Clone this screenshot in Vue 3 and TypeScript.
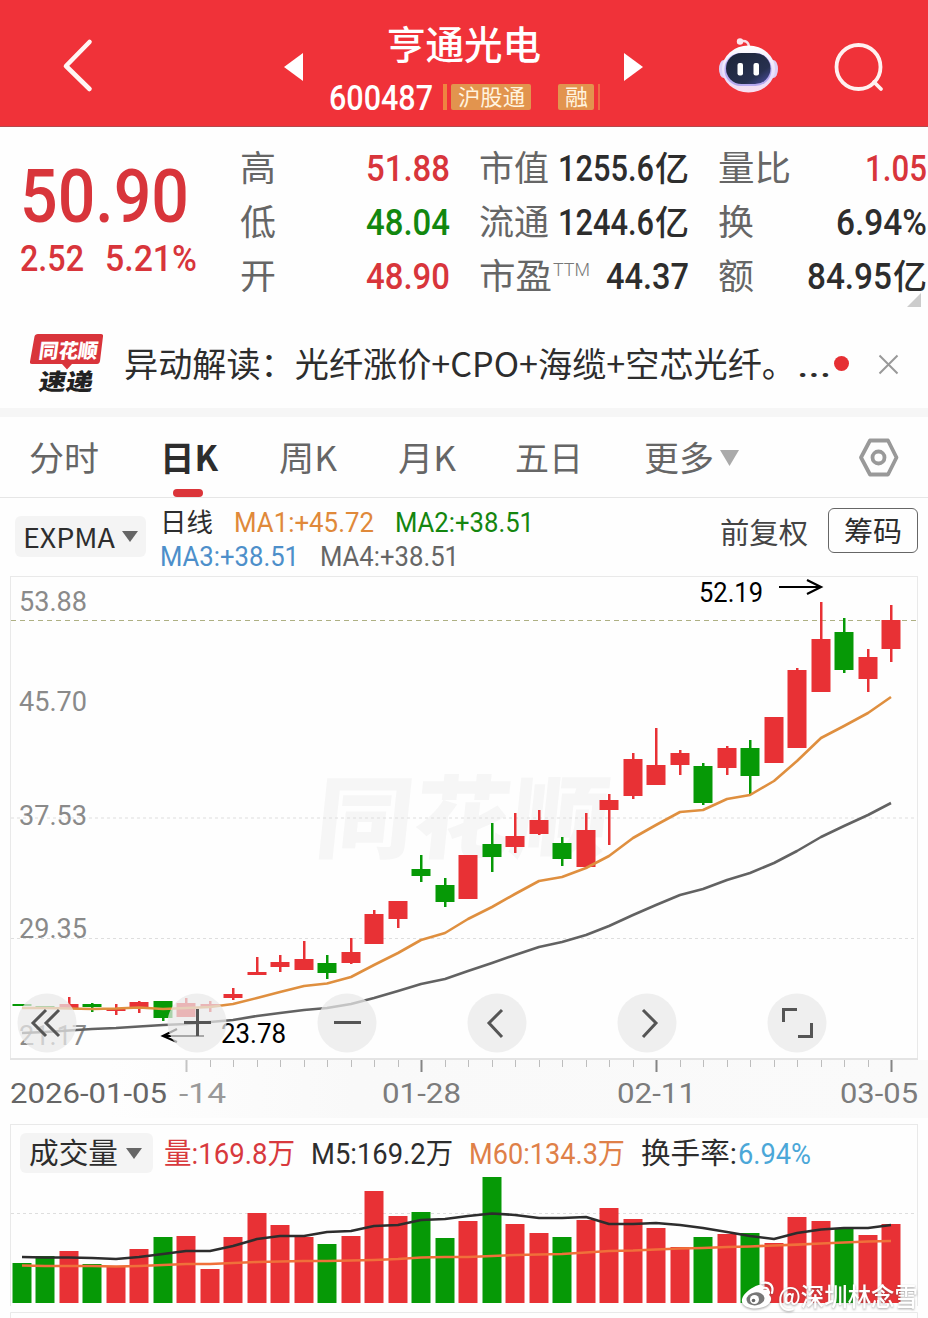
<script setup lang="ts">
import { h, type FunctionalComponent } from 'vue'

// A run of text set to an exact width; the bottom edge of its box is the baseline.
const Fit: FunctionalComponent<{ t: string; w: number }> = (p) =>
  h('svg', { width: p.w, class: 'fit' }, [
    h('text', { x: 0, y: '0.95em', textLength: p.w, lengthAdjust: 'spacingAndGlyphs' }, p.t),
  ])
Fit.props = ['t', 'w']

interface Stat { label: string; lw: number; value: string; vw: number; unit?: string; tone?: string; sup?: string }
const stats: Stat[][] = [
  [
    { label: '高', lw: 36, value: '51.88', vw: 84, tone: 'up' },
    { label: '低', lw: 36, value: '48.04', vw: 84, tone: 'down' },
    { label: '开', lw: 36, value: '48.90', vw: 84, tone: 'up' },
  ],
  [
    { label: '市值', lw: 70, value: '1255.6', vw: 96, unit: '亿' },
    { label: '流通', lw: 70, value: '1244.6', vw: 96, unit: '亿' },
    { label: '市盈', lw: 73, value: '44.37', vw: 83, sup: 'TTM' },
  ],
  [
    { label: '量比', lw: 73, value: '1.05', vw: 62, tone: 'up' },
    { label: '换', lw: 36, value: '6.94%', vw: 91 },
    { label: '额', lw: 36, value: '84.95', vw: 85, unit: '亿' },
  ],
]

const tabs = [
  { t: '分时', w: 70 }, { t: '日K', w: 58, on: true }, { t: '周K', w: 58 },
  { t: '月K', w: 58 }, { t: '五日', w: 68 }, { t: '更多', w: 70 },
]

const cx = (i: number) => Math.round(22 + 23.49 * i)

// high, body top, body bottom, low, rising
const candles: [number, number, number, number, 0 | 1][] = [
  [1004, 1004, 1006, 1006, 0], [1006, 1006, 1008, 1009, 0], [997, 1004, 1009, 1009, 1], [1003, 1004, 1007, 1012, 0],
  [1004, 1008, 1011, 1015, 1], [1001, 1002, 1009, 1013, 1], [1001, 1001, 1018, 1021, 0], [998, 1003, 1017, 1017, 1],
  [1001, 1004, 1007, 1012, 1], [988, 994, 998, 1000, 1], [957, 972, 975, 975, 1], [955, 962, 967, 972, 1],
  [941, 959, 970, 970, 1], [955, 963, 973, 979, 0], [938, 952, 963, 964, 1], [910, 914, 944, 944, 1],
  [901, 901, 919, 928, 1], [855, 869, 876, 882, 0], [878, 885, 902, 907, 0], [855, 855, 899, 899, 1],
  [823, 844, 857, 872, 0], [813, 836, 847, 853, 1], [810, 820, 834, 835, 1], [837, 843, 859, 866, 0],
  [813, 830, 867, 867, 1], [794, 800, 810, 845, 1], [753, 759, 796, 799, 1], [728, 765, 785, 785, 1],
  [750, 753, 765, 775, 1], [763, 766, 803, 805, 0], [746, 748, 768, 775, 1], [740, 748, 776, 794, 0],
  [717, 717, 763, 763, 1], [668, 670, 748, 748, 1], [602, 639, 692, 692, 1], [618, 632, 670, 673, 0],
  [649, 657, 679, 692, 1], [605, 620, 649, 662, 1],
]
const line = (ys: number[]) => ys.map((y, i) => `${cx(i)},${y}`).join(' ')
const ma1 = line([1008, 1008, 1008.5, 1009, 1008.5, 1007.5, 1009, 1008, 1007, 1004, 998, 992, 986, 983.5, 977, 965, 953, 940, 933, 919, 907, 894, 881, 877, 868, 856, 838, 825, 812, 810, 799, 795, 781, 761, 738, 726, 713, 697])
const ma4 = line([1033, 1032, 1030.5, 1029, 1028, 1026.5, 1025, 1024, 1022, 1020, 1016, 1013, 1010, 1008, 1004, 998, 991, 984, 979, 971, 963, 955, 947, 942, 935, 926, 915, 905, 895, 889, 880, 873, 863, 851, 837, 826, 815, 803])

const axis = [
  { t: '53.88', y: 611 }, { t: '45.70', y: 711 }, { t: '37.53', y: 825 }, { t: '29.35', y: 938 }, { t: '21.17', y: 1045 },
]
const ticks = Array.from({ length: 31 }, (_, k) => k + 7)
const buttons = [47, 197, 347, 497, 647, 797]

const volTops = [1263, 1256, 1251, 1264, 1266, 1249, 1237, 1236, 1269, 1237, 1213, 1225, 1237, 1244, 1236, 1191, 1216, 1212, 1238, 1221, 1177, 1224, 1233, 1237, 1220, 1208, 1219, 1228, 1247, 1237, 1234, 1233, 1243, 1217, 1221, 1229, 1235, 1224]
const m5 = line([1257, 1257.5, 1257.5, 1258, 1259, 1257, 1254, 1251, 1251, 1246, 1239, 1236, 1236, 1232, 1231, 1226, 1225, 1220, 1219, 1216, 1213.5, 1215, 1218, 1218, 1217, 1224, 1224, 1223, 1225, 1228, 1232, 1236, 1239, 1233, 1229.5, 1228, 1228, 1225])
const m60 = line([1265.5, 1266, 1266, 1266, 1266.5, 1266, 1265, 1264, 1264, 1263, 1262, 1261.5, 1261, 1261, 1260.5, 1260, 1259, 1257.5, 1257, 1257, 1256, 1255, 1254.5, 1254, 1252.5, 1251, 1250.5, 1249.5, 1248.5, 1248, 1247, 1246.5, 1245.5, 1244.6, 1243.5, 1242.5, 1241.5, 1241])
</script>

<template>
  <div class="page">
    <header class="top">
      <svg class="back" width="30" height="54"><path d="M27.500 4L4 28L27.500 51" /></svg>
      <svg class="prev" width="19" height="28"><path d="M0 14L19 0V28Z" /></svg>
      <div class="name">
        <Fit class="title" t="亨通光电" w="154" />
        <div class="codeline">
          <Fit class="code" t="600487" w="104" />
          <i class="bar"></i>
          <span class="badge wide"><Fit t="沪股通" w="67" /></span>
          <span class="badge one"><Fit t="融" w="23" /></span>
          <i class="bar thin"></i>
        </div>
      </div>
      <svg class="next" width="19" height="28"><path d="M19 14L0 0V28Z" /></svg>
      <svg class="robot" width="60" height="56" viewBox="718 37 60 56">
        <defs>
          <linearGradient id="shell" x1="0" y1="0" x2="0" y2="1"><stop offset="0" stop-color="#fff" /><stop offset=".65" stop-color="#e9dcfb" /><stop offset="1" stop-color="#f8dff0" /></linearGradient>
          <linearGradient id="visor" x1="0" y1="0" x2="1" y2="1"><stop offset="0" stop-color="#1c2438" /><stop offset=".7" stop-color="#27304f" /><stop offset="1" stop-color="#4d4fa5" /></linearGradient>
        </defs>
        <path d="M740 41.500C746 40 749 42 749 48" fill="none" stroke="#f8dfe8" stroke-width="2.500" />
        <circle cx="740" cy="41.500" r="3.200" fill="#fbe6ee" />
        <ellipse cx="723.500" cy="69" rx="4.500" ry="9" fill="#dcd0f5" /><ellipse cx="773.500" cy="69" rx="4.500" ry="9" fill="#dcd0f5" />
        <ellipse cx="748.500" cy="69" rx="26.500" ry="23.500" fill="url(#shell)" />
        <rect x="724.500" y="53" width="47" height="33" rx="16" fill="#b6a9ef" />
        <rect x="726" y="53" width="44.500" height="31" rx="15.500" fill="url(#visor)" />
        <rect x="737.500" y="63" width="5.500" height="12.500" rx="2" fill="#fff" /><rect x="753.500" y="63" width="5.500" height="12.500" rx="2" fill="#fff" />
      </svg>
      <svg class="search" width="52" height="52"><circle cx="24.500" cy="24" r="22" /><path d="M40 39L47 46" /></svg>
    </header>

    <section class="quote">
      <div class="price up">
        <div class="row big"><Fit t="50.90" w="169" /></div>
        <div class="row chg"><Fit t="2.52" w="64" /><Fit t="5.21%" w="92" /></div>
      </div>
      <div v-for="(g, gi) in stats" :key="gi" class="group">
        <div v-for="s in g" :key="s.label" class="row stat">
          <Fit class="lbl" :t="s.label" :w="s.lw" />
          <Fit v-if="s.sup" class="sup" :t="s.sup" w="37" />
          <span class="val" :class="s.tone"><Fit class="num" :t="s.value" :w="s.vw" /><Fit v-if="s.unit" class="unit" :t="s.unit" w="34" /></span>
        </div>
      </div>
      <i class="corner"></i>
    </section>

    <section class="news">
      <svg class="brand" width="76" height="62" viewBox="29 333 76 62">
        <path d="M38 334H101Q103.500 334 103 336.500L100 361Q99.500 364 97 364H72L67 369.500L62 364H32Q29.500 364 30 361.500L34.500 336.500Q35 334 38 334Z" fill="#d9343b" />
        <text transform="translate(38 358) skewX(-8)" textLength="59" lengthAdjust="spacingAndGlyphs" font-size="20" fill="#fff">同花顺</text>
        <text transform="translate(38 390) skewX(-10)" textLength="54" lengthAdjust="spacingAndGlyphs" font-size="23" fill="#222">速递</text>
      </svg>
      <Fit class="headline" t="异动解读：光纤涨价+CPO+海缆+空芯光纤。" w="672" />
      <Fit class="dots" t="..." w="34" />
      <i class="reddot"></i>
      <svg class="close" width="21" height="21"><path d="M1.500 1.500L19.500 19.500M19.500 1.500L1.500 19.500" /></svg>
    </section>

    <nav class="tabs">
      <div v-for="tab in tabs" :key="tab.t" class="tab" :class="{ on: tab.on }"><Fit :t="tab.t" :w="tab.w" /><i v-if="tab.on"></i></div>
      <svg class="more" width="19" height="16"><path d="M0 0H19L9.500 16Z" /></svg>
      <svg class="hex" width="42" height="40" viewBox="858 438 42 40"><path d="M870 440.500H888L896.500 457.500L888 474.500H870L861 457.500Z" /><circle cx="878.500" cy="457.500" r="6" /></svg>
    </nav>

    <section class="legend">
      <div class="chip"><Fit t="EXPMA" w="92" /><svg width="16" height="11"><path d="M0 0H16L8 11Z" /></svg></div>
      <div class="mas">
        <div class="row l1"><Fit class="dark cjk" t="日线" w="53" /><Fit class="c1" t="MA1:+45.72" w="140" /><Fit class="c2" t="MA2:+38.51" w="139" /></div>
        <div class="row l2"><Fit class="c3" t="MA3:+38.51" w="139" /><Fit class="c4" t="MA4:+38.51" w="139" /></div>
      </div>
      <Fit class="adj" t="前复权" w="88" />
      <div class="outline"><Fit t="筹码" w="58" /></div>
    </section>

    <svg class="chart" width="928" height="544" viewBox="0 574 928 544">
      <defs><linearGradient id="fade" x1="0" y1="0" x2="1" y2="0"><stop offset="0" stop-color="#fefefe" /><stop offset=".3" stop-color="#f9f9f9" /><stop offset="1" stop-color="#fafafa" /></linearGradient></defs>
      <rect x="110" y="1060" width="818" height="58" fill="url(#fade)" />
      <rect class="frame" x="10.500" y="576.500" width="907" height="482" />
      <path d="M10 1059H918" stroke="#e4e4e4" stroke-width="2" />
      <text class="ghost" transform="translate(313 851) skewX(-6)" textLength="293" lengthAdjust="spacingAndGlyphs">同花顺</text>
      <path class="grid" d="M11 818H917M11 938.500H917" />
      <path d="M11 620.500H917" stroke="#aeb083" stroke-width="1" stroke-dasharray="5 4" />
      <text v-for="a in axis" :key="a.t" class="axis" x="19" :y="a.y" textLength="68" lengthAdjust="spacingAndGlyphs">{{ a.t }}</text>
      <g v-for="(c, i) in candles" :key="i" :class="c[4] ? 'rise' : 'fall'">
        <rect :x="cx(i) - 1" :y="c[0]" width="2.500" :height="c[3] - c[0]" />
        <rect :x="cx(i) - 9.500" :y="c[1]" width="19" :height="c[2] - c[1]" />
      </g>
      <polyline :points="ma4" class="ln" stroke="#626262" />
      <polyline :points="ma1" class="ln" stroke="#df8f3f" />
      <g class="mark">
        <text x="699" y="602" textLength="64" lengthAdjust="spacingAndGlyphs">52.19</text>
        <path d="M779 587H820M807 580L821 587L807 594" />
        <text x="221" y="1043" textLength="65" lengthAdjust="spacingAndGlyphs">23.78</text>
        <path d="M204 1036H163" stroke-width="1.500" /><path d="M177 1029L163 1036L177 1042" />
      </g>
      <circle v-for="b in buttons" :key="b" :cx="b" cy="1023" r="29.500" fill="#e9e9e9" fill-opacity=".72" />
      <g class="ico">
        <path d="M46 1010L33 1023L46 1036M59 1010L46 1023L59 1036" />
        <path d="M184 1022.500H211M197.500 1009V1036" /><path d="M334 1022.500H361" />
        <path d="M502 1010L489 1023L502 1037" /><path d="M643 1010L656 1023L643 1037" />
        <path d="M783.500 1022V1009.500H797M798 1036.500H811.500V1023" />
      </g>
      <path v-for="k in ticks" :key="k" :d="`M${cx(k) + 0.5} 1060V${k % 10 === 7 ? 1072 : 1067}`" :stroke="k === 7 ? '#c4c4c4' : k % 10 === 7 ? '#858585' : '#bdbdbd'" :stroke-width="k % 10 === 7 ? 2 : 1" />
      <g class="dates">
        <text x="10" y="1103" textLength="157" lengthAdjust="spacingAndGlyphs" fill="#666">2026-01-05</text>
        <text x="179" y="1103" textLength="47" lengthAdjust="spacingAndGlyphs" fill="#999">-14</text>
        <text x="382" y="1103" textLength="79" lengthAdjust="spacingAndGlyphs" fill="#7c7c7c">01-28</text>
        <text x="617" y="1103" textLength="79" lengthAdjust="spacingAndGlyphs" fill="#7c7c7c">02-11</text>
        <text x="840" y="1103" textLength="78" lengthAdjust="spacingAndGlyphs" fill="#7c7c7c">03-05</text>
      </g>
    </svg>

    <section class="volume">
      <div class="vhead">
        <div class="chip vchip"><Fit t="成交量" w="89" /><svg width="16" height="11"><path d="M0 0H16L8 11Z" /></svg></div>
        <Fit class="v1" t="量:169.8万" w="131" />
        <Fit class="v2" t="M5:169.2万" w="142" />
        <Fit class="v3" t="M60:134.3万" w="156" />
        <Fit class="v4" t="换手率:" w="96" />
        <Fit class="v5" t="6.94%" w="73" />
      </div>
      <svg class="bars" width="928" height="144" viewBox="0 1174 928 144">
        <path d="M10.500 1174V1306M917.500 1174V1306M10.500 1318V1312.500H917.500V1318" fill="none" stroke="#e9e9e9" />
        <path class="grid" d="M11 1213.500H917" />
        <rect v-for="(y, i) in volTops" :key="i" :class="candles[i][4] ? 'rise' : 'fall'" :x="cx(i) - 9.500" :y="y" width="19" :height="1303 - y" />
        <polyline :points="m5" class="ln" stroke="#2d2d2d" />
        <polyline :points="m60" class="ln" stroke="#f0703a" />
        <g class="credit">
          <path d="M754 1287C761 1283 765 1286 763 1290C769 1288 772 1292 769 1295C773 1298 771 1303 766 1306C758 1310 747 1309 743 1304C739 1299 746 1291 754 1287Z" fill="#fff" />
          <ellipse cx="755.500" cy="1299" rx="9" ry="6.500" transform="rotate(-8 755 1299)" fill="#777" />
          <circle cx="754.500" cy="1299.500" r="4.500" fill="#fff" /><circle cx="753.500" cy="1300.500" r="1.800" fill="#666" />
          <path d="M762 1283C770 1281 774 1286 772 1293M763 1288C767 1287 769 1289 768 1292" fill="none" stroke="#fff" stroke-width="2.200" stroke-linecap="round" />
          <text x="778" y="1306" textLength="140" lengthAdjust="spacingAndGlyphs">@深圳林念雪</text>
        </g>
      </svg>
    </section>
  </div>
</template>

<style>
body { margin: 0; background: #fff; }
</style>

<style scoped>
.page { width: 928px; height: 1318px; overflow: hidden; background: #fefefe; color: #2d2d2d; font-family: Roboto, "Noto Sans CJK SC", sans-serif; }
svg { display: block; flex: none; overflow: visible; }
.fit { height: 0.95em; fill: currentColor; }
.row { display: flex; align-items: flex-end; }
.up { color: #d8353b; }
.down { color: #12870f; }

.top { display: flex; height: 127px; box-sizing: border-box; background: #f03239; color: #fff; border-bottom: 1px solid #b5484c; }
.top svg path { fill: #fff; }
.back { margin: 38px 0 0 62px; }
.top .back path { fill: none; stroke: #fff6f4; stroke-width: 4.6; stroke-linecap: round; stroke-linejoin: round; }
.prev { margin: 53px 0 0 192px; }
.name { width: 271px; margin-left: 26px; }
.title { margin: 22px 0 0 58px; font-size: 38.5px; font-weight: 500; }
.codeline { display: flex; align-items: flex-end; height: 51px; }
.code { font-size: 34.5px; font-weight: 500; }
.bar { width: 4px; height: 26px; margin-left: 10px; background: #ef8440; }
.bar.thin { width: 1.5px; margin-left: 4px; background: #ee6a45; }
.badge { display: flex; align-items: flex-end; justify-content: center; height: 26px; margin-left: 4px; border-radius: 2px; background: #e2944e; font-size: 22px; box-sizing: border-box; padding-bottom: 5px; color: #fff3df; }
.wide { width: 80px; }
.one { width: 36px; margin-left: 27px; }
.next { margin: 53px 0 0 24px; }
.robot { margin: 37px 0 0 75px; }
.top .robot path { fill: none; }
.search { margin: 43px 0 0 56px; fill: none; stroke: #fff1f0; stroke-width: 3.8; stroke-linecap: round; }

.quote { position: relative; display: flex; height: 185px; }
.price { width: 240px; }
.big { height: 95px; padding-left: 20px; font-size: 74px; font-weight: 500; }
.chg { height: 49px; padding-left: 20px; gap: 21px; font-size: 36px; font-weight: 500; }
.group { width: 210px; margin-right: 29px; flex: none; }
.group:last-of-type { width: 209px; margin-right: 0; }
.stat { height: 54px; }
.lbl { color: #666; font-size: 35px; font-family: "Noto Sans CJK SC", sans-serif; }
.sup { color: #777; font-size: 19px; margin: 0 0 13px 1px; font-weight: 300; }
.val { display: flex; align-items: flex-end; margin-left: auto; }
.num { font-size: 37px; font-weight: 500; }
.unit { font-size: 34px; margin-left: 1px; font-weight: 500; font-family: "Noto Sans CJK SC", sans-serif; }
.corner { position: absolute; right: 7px; top: 166px; border-left: 14px solid transparent; border-bottom: 14px solid #ccc; }

.news { display: flex; height: 96px; border-bottom: 9px solid #f6f6f6; align-items: flex-start; font-family: "Noto Sans CJK SC", sans-serif; }
.brand { margin: 21px 0 0 29px; font-weight: 900; }
.headline { margin: 33px 0 0 19px; font-size: 34px; }
.dots { margin: 37px 0 0 1px; font-size: 29px; }
.reddot { width: 15px; height: 15px; margin: 44px 0 0 3px; border-radius: 50%; background: #e62f33; }
.close { margin: 42px 0 0 29px; fill: none; stroke: #999; stroke-width: 2; }

.tabs { display: flex; height: 80px; padding-left: 29px; border-bottom: 1px solid #e6e6e6; font-size: 34.5px; color: #666; font-family: "Noto Sans CJK SC", sans-serif; }
.tab { height: 54px; display: flex; align-items: flex-end; margin-right: 61px; position: relative; }
.tab:nth-child(4) { margin-right: 59px; }
.tab.on { color: #2d2d2d; font-weight: 700; }
.tab i { position: absolute; left: 13px; top: 72px; width: 30px; height: 8px; border-radius: 4px; background: #db353a; }
.more { margin: 33px 0 0 -55px; fill: #aaa; }
.hex { margin: 21px 0 0 119px; fill: none; stroke: #999; stroke-width: 3.8; stroke-linejoin: round; }

.legend { display: flex; height: 76px; }
.chip { display: flex; width: 131px; height: 41px; margin: 18px 0 0 15px; border-radius: 6px; background: #f4f4f4; font-size: 26.5px; font-family: "Noto Sans CJK SC", sans-serif; }
.chip .fit { margin: 7px 7px 0 8px; }
.chip svg:last-child { margin-top: 15px; fill: #666; }
.mas { margin-left: 14px; width: 560px; font-size: 27px; }
.l1 { height: 34px; gap: 21px; }
.l2 { height: 34px; gap: 21px; }
.dark { color: #2d2d2d; }
.cjk { font-size: 26px; }
.c1 { color: #e0893a; } .c2 { color: #14860f; } .c3 { color: #4d8fca; } .c4 { color: #666; }
.adj { margin: 18px 0 0 0; font-size: 29px; color: #444; }
.outline { box-sizing: border-box; width: 90px; height: 45px; margin: 10px 0 0 20px; border: 1px solid #666; border-radius: 6px; font-size: 28.5px; padding: 6px 0 0 15px; }

.frame { fill: none; stroke: #e9e9e9; }
.ghost { font: 900 90px "Noto Sans CJK SC", sans-serif; fill: #f6f6f6; }
.grid { stroke: #dedede; stroke-dasharray: 3 3; fill: none; }
.axis { font-size: 28px; fill: #8a8a8a; }
.rise { fill: #e83135; }
.fall { fill: #069906; }
.ln { fill: none; stroke-width: 2.6; stroke-linejoin: round; }
.mark { font-size: 27px; fill: #000; }
.mark path { fill: none; stroke: #000; stroke-width: 2.2; }
.ico path { fill: none; stroke: #555; stroke-width: 3; }
.dates { font-size: 28.5px; }

.volume { height: 200px; margin-top: 6px; }
.vhead { display: flex; height: 49px; margin: 0 10px; border: 1px solid #e9e9e9; border-bottom: 0; font-size: 29px; align-items: flex-start; }
.vchip { width: 133px; height: 40px; margin: 8px 0 0 9px; font-size: 29px; }
.vchip .fit { margin: 3px 8px 0 9px; }
.vhead > .fit { margin-top: 11px; }
.v1 { color: #d8393d; margin-left: 11px; }
.v2 { margin-left: 16px; }
.v3 { color: #df8048; margin-left: 16px; }
.v4 { margin-left: 16px; }
.v5 { color: #4ba7d8; margin-left: 1px; }
.credit { filter: drop-shadow(0 1px 1px #5558); }
.credit text { font: 500 25px "Noto Sans CJK SC", sans-serif; fill: #fff; }
</style>
